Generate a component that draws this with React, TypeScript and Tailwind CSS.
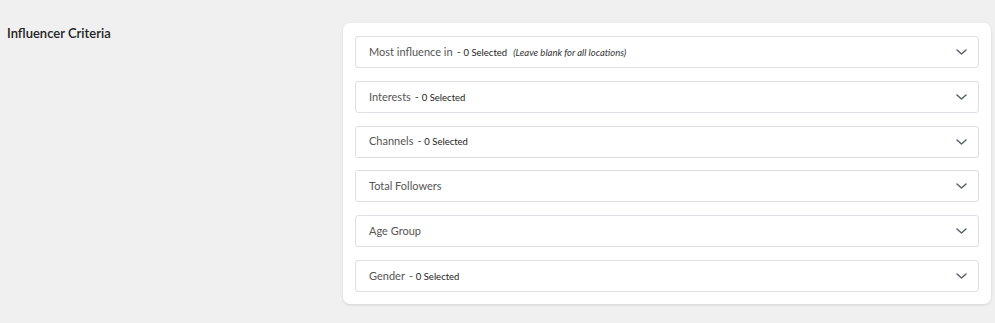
type Row = {
  label: string;
  selected?: boolean;
  note?: string;
};

const rows: Row[] = [
  { label: "Most influence in", selected: true, note: "(Leave blank for all locations)" },
  { label: "Interests", selected: true },
  { label: "Channels", selected: true },
  { label: "Total Followers" },
  { label: "Age Group" },
  { label: "Gender", selected: true },
];

function Chevron() {
  return (
    <svg viewBox="0 0 11 6" className="h-[6px] w-[11px]" fill="none" aria-hidden>
      <path
        d="M1 1l4.5 4L10 1"
        stroke="#56606e"
        strokeWidth="1.5"
        strokeLinecap="round"
        strokeLinejoin="round"
      />
    </svg>
  );
}

function CriteriaRow({ label, selected, note }: Row) {
  return (
    <button
      type="button"
      className="flex h-[32px] w-full items-center justify-between rounded-[3px] border border-[#dcdfe4] bg-white pl-[13px] pr-[11px] text-left"
    >
      <span className="flex items-baseline whitespace-nowrap">
        <span className="text-[11px] text-[#555]">{label}</span>
        {selected && (
          <span className="ml-[4px] text-[11px] text-[#555]">
            - <span className="text-[9.5px] text-[#222]">0 Selected</span>
          </span>
        )}
        {note && (
          <span className="ml-[6px] text-[9.5px] italic text-[#333]">{note}</span>
        )}
      </span>
      <Chevron />
    </button>
  );
}

export default function App() {
  return (
    <div
      className="flex min-h-[323px] w-full items-start bg-[#f0f0f0] pt-[23px]"
      style={{ fontFamily: "Lato, 'Open Sans', sans-serif" }}
    >
      <div className="w-[343px] shrink-0 pl-[7px] pt-[1px]">
        <h3 className="text-[13px] font-semibold text-[#222]">Influencer Criteria</h3>
      </div>
      <div className="mr-[4px] flex-1 rounded-[7px] bg-white px-[12px] pb-[12px] pt-[13px] shadow-[0_1px_3px_rgba(0,0,0,0.12)]">
        <div className="flex flex-col gap-[12.8px]">
          {rows.map((r) => (
            <CriteriaRow key={r.label} {...r} />
          ))}
        </div>
      </div>
    </div>
  );
}
